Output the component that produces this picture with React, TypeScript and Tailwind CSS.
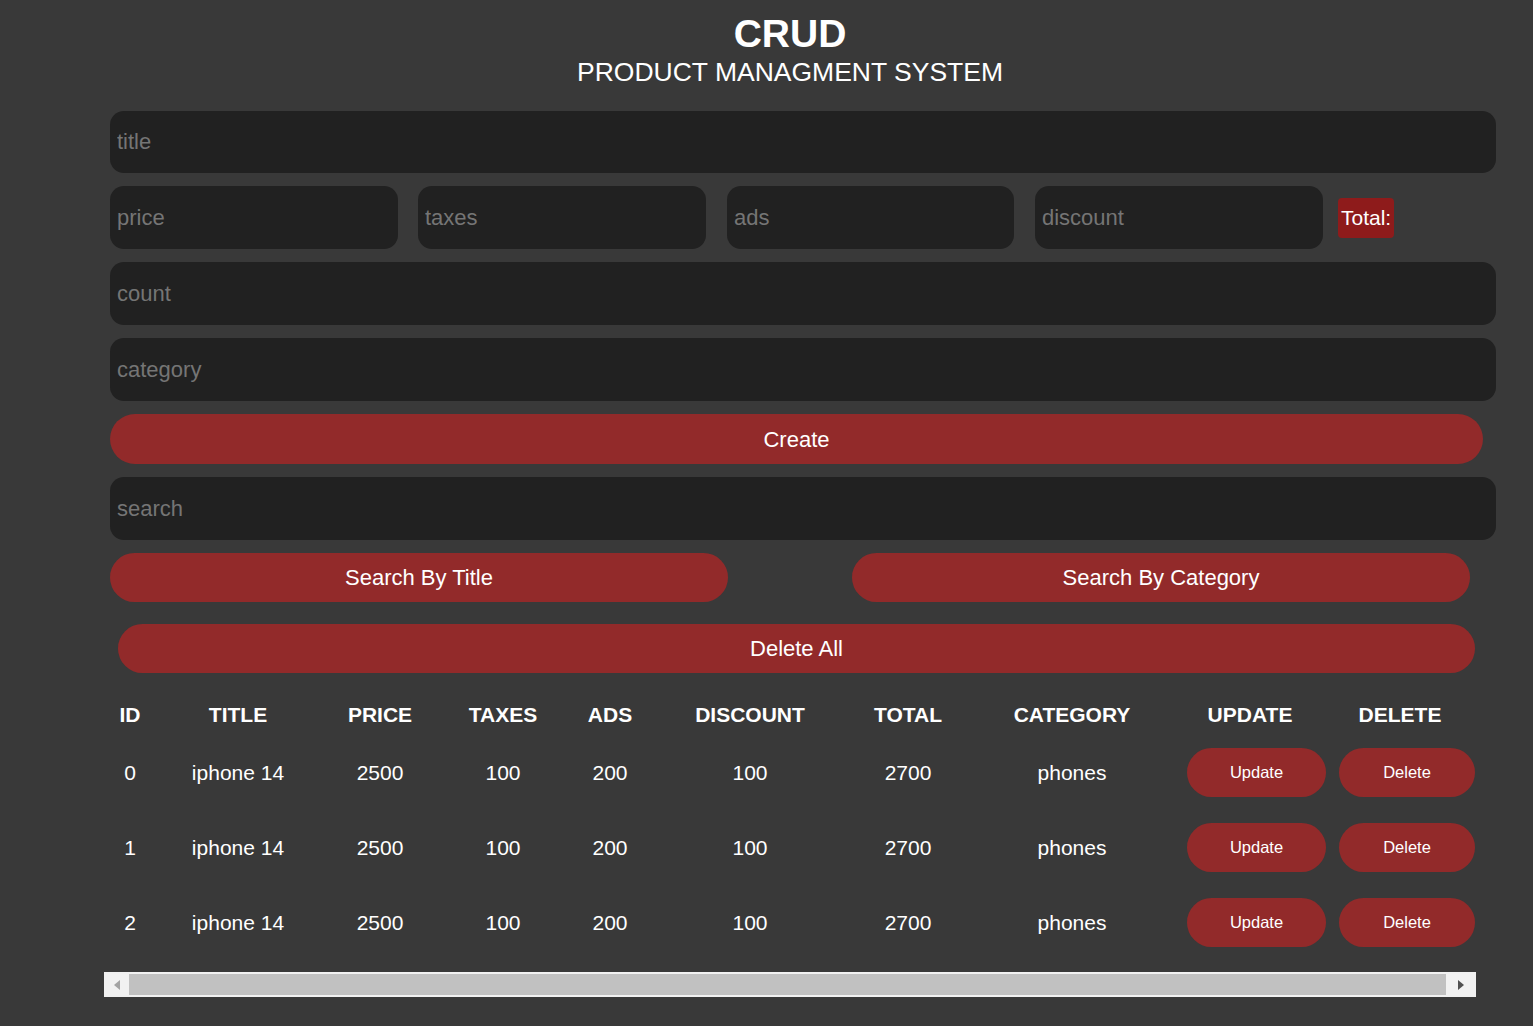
const ROWS = [0, 1, 2].map((id) => ({
  id,
  title: "iphone 14",
  price: 2500,
  taxes: 100,
  ads: 200,
  discount: 100,
  total: 2700,
  category: "phones",
}));

const COLS = [
  { label: "ID", w: "w-[52px]" },
  { label: "TITLE", w: "w-[164px]" },
  { label: "PRICE", w: "w-[120px]" },
  { label: "TAXES", w: "w-[126px]" },
  { label: "ADS", w: "w-[88px]" },
  { label: "DISCOUNT", w: "w-[192px]" },
  { label: "TOTAL", w: "w-[124px]" },
  { label: "CATEGORY", w: "w-[204px]" },
  { label: "UPDATE", w: "w-[152px]" },
  { label: "DELETE", w: "w-[148px]" },
];

const inputCls =
  "h-[63px] rounded-[14px] bg-[#212121] px-[7px] text-[22px] text-white placeholder:text-[#757575] outline-none";

function RedButton({ children, className = "" }: { children: React.ReactNode; className?: string }) {
  return (
    <button className={`rounded-full bg-[#922a2a] text-[22px] text-white ${className}`}>
      {children}
    </button>
  );
}

export default function App() {
  return (
    <div className="min-h-screen w-full bg-[#393939] font-['Liberation_Sans',Arial,sans-serif] text-white">
      {/* Header */}
      <div className="pl-[47px] pt-[10px] text-center">
        <h1 className="text-[39px] font-bold leading-[48px]">CRUD</h1>
        <p className="text-[26.5px] leading-[28px]">PRODUCT MANAGMENT SYSTEM</p>
      </div>

      {/* Form */}
      <div className="ml-[110px] mt-[25px] flex w-[1386px] flex-col gap-[13px]">
        <input className={`${inputCls} !h-[62px]`} placeholder="title" />
        <div className="flex items-center">
          <input className={`${inputCls} w-[288px]`} placeholder="price" />
          <input className={`${inputCls} ml-[20px] w-[288px]`} placeholder="taxes" />
          <input className={`${inputCls} ml-[21px] w-[287px]`} placeholder="ads" />
          <input className={`${inputCls} ml-[21px] w-[288px]`} placeholder="discount" />
          <div className="ml-[15px] flex h-[40px] items-center rounded-[4px] bg-[#8e1b1b] px-[3px] text-[21px]">
            Total:
          </div>
        </div>
        <input className={inputCls} placeholder="count" />
        <input className={inputCls} placeholder="category" />
        <RedButton className="h-[50px] w-[1373px]">Create</RedButton>
        <input className={inputCls} placeholder="search" />
        <div className="flex">
          <RedButton className="h-[49px] w-[618px]">Search By Title</RedButton>
          <RedButton className="ml-[124px] h-[49px] w-[618px]">Search By Category</RedButton>
        </div>
        <RedButton className="ml-[8px] mt-[9px] h-[49px] w-[1357px]">Delete All</RedButton>
      </div>

      {/* Table */}
      <div className="ml-[104px] mt-[22px] w-[1372px]">
        <div className="flex h-[40px] items-center text-[21px] font-bold">
          {COLS.map((c) => (
            <div key={c.label} className={`${c.w} shrink-0 text-center`}>
              {c.label}
            </div>
          ))}
        </div>
        {ROWS.map((r) => (
          <div key={r.id} className="flex h-[75px] items-center text-[21px]">
            <div className="w-[52px] shrink-0 text-center">{r.id}</div>
            <div className="w-[164px] shrink-0 text-center">{r.title}</div>
            <div className="w-[120px] shrink-0 text-center">{r.price}</div>
            <div className="w-[126px] shrink-0 text-center">{r.taxes}</div>
            <div className="w-[88px] shrink-0 text-center">{r.ads}</div>
            <div className="w-[192px] shrink-0 text-center">{r.discount}</div>
            <div className="w-[124px] shrink-0 text-center">{r.total}</div>
            <div className="w-[204px] shrink-0 text-center">{r.category}</div>
            <div className="flex w-[152px] shrink-0 justify-end">
              <button className="h-[49px] w-[139px] rounded-full bg-[#922a2a] text-[16.5px] text-white">
                Update
              </button>
            </div>
            <div className="flex w-[148px] shrink-0 justify-end">
              <button className="-mr-px h-[49px] w-[136px] rounded-full bg-[#922a2a] text-[16.5px] text-white">
                Delete
              </button>
            </div>
          </div>
        ))}

        {/* Horizontal scrollbar */}
        <div className="mt-[12px] flex h-[25px] items-center bg-[#f1f1f1]">
          <div className="flex w-[25px] shrink-0 items-center justify-center">
            <svg width="6" height="10" viewBox="0 0 6 10">
              <path d="M6 0 L0 5 L6 10 Z" fill="#a3a3a3" />
            </svg>
          </div>
          <div className="h-[21px] flex-1 bg-[#c1c1c1]" />
          <div className="flex w-[30px] shrink-0 items-center justify-center">
            <svg width="6" height="10" viewBox="0 0 6 10">
              <path d="M0 0 L6 5 L0 10 Z" fill="#505050" />
            </svg>
          </div>
        </div>
      </div>
    </div>
  );
}
